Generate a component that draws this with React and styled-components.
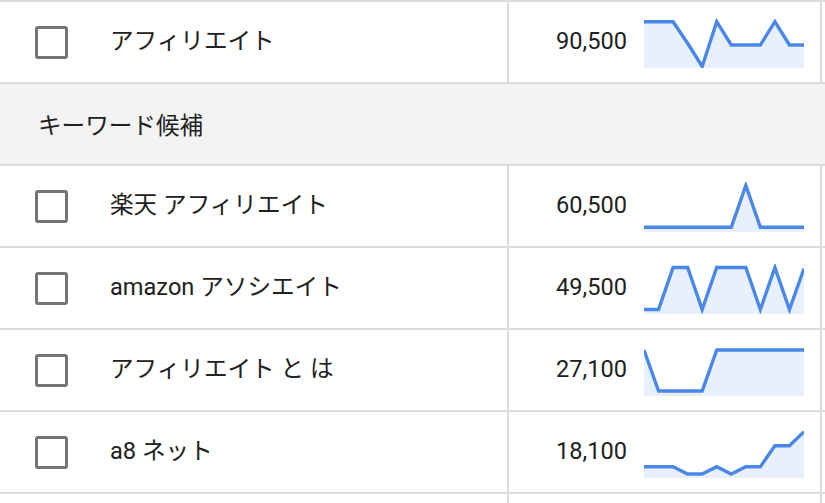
import styled, { createGlobalStyle } from 'styled-components';

const GlobalStyle = createGlobalStyle`
    html, body {
        margin: 0;
        padding: 0;
        background: #ffffff;
    }
    body {
        font-family: Roboto, "Noto Sans CJK JP", sans-serif;
        color: #212121;
    }
`;

// y values for 12 points, drawn in a 160x50 box
const searched = { keyword: 'アフィリエイト', volume: '90,500', trend: [3.7, 3.7, 3.7, 25.3, 48.5, 3.7, 27, 27, 27, 3.7, 27, 27] };

const ideas = [
    { keyword: '楽天 アフィリエイト', volume: '60,500', trend: [45.3, 45.3, 45.3, 45.3, 45.3, 45.3, 45.3, 3.5, 45.3, 45.3, 45.3, 45.3] },
    { keyword: 'amazon アソシエイト', volume: '49,500', trend: [45.5, 45.5, 3.5, 3.5, 45.5, 3.5, 3.5, 3.5, 45.5, 3.5, 45.5, 4.5] },
    { keyword: 'アフィリエイト と は', volume: '27,100', trend: [4, 45, 45, 45, 45, 4, 4, 4, 4, 4, 4, 4] },
    { keyword: 'a8 ネット', volume: '18,100', trend: [38.7, 38.7, 38.7, 46, 46, 38.7, 46, 38.7, 38.7, 17.7, 17.7, 3.7] }
];

function Sparkline ({ values }) {

    const step = 160 / (values.length - 1);
    const pts = values.map((y, i) => `${(i * step).toFixed(2)},${y}`).join(' ');

    return (
        <SparkSvg width="160" height="50" viewBox="0 0 160 50">
            <polygon points={`0,50 ${pts} 160,50`} fill="#e8f0fe" />
            <polyline points={pts} fill="none" stroke="#4a88e8" strokeWidth="3.4" strokeLinejoin="miter" />
        </SparkSvg>
    );

}

function KeywordRow ({ item }) {

    return (
        <Row>
            <KeywordCell>
                <Checkbox />
                <Keyword>{item.keyword}</Keyword>
            </KeywordCell>
            <VolumeCell>
                <Volume>{item.volume}</Volume>
                <Sparkline values={item.trend} />
            </VolumeCell>
        </Row>
    );

}

export default function App () {

    return (
        <>
            <GlobalStyle />
            <Table>
                <KeywordRow item={searched} />
                <SectionRow>キーワード候補</SectionRow>
                {ideas.map(item => <KeywordRow key={item.keyword} item={item} />)}
                <Row>
                    <KeywordCell />
                    <VolumeCell />
                </Row>
            </Table>
        </>
    );

}

const Table = styled.div`

    width: 825px;
    border-top: 2px solid #dadce0;
    display: flex;
    flex-direction: column;

`;

const Row = styled.div`

    display: flex;
    height: 80px;
    border-bottom: 2px solid #dadce0;

`;

const SectionRow = styled.div`

    height: 80px;
    display: flex;
    align-items: center;
    padding-left: 38px;
    background: #f3f3f3;
    border-bottom: 2px solid #dadce0;
    font-size: 23.6px;

`;

const KeywordCell = styled.div`

    width: 509px;
    box-sizing: border-box;
    border-right: 2px solid #dadce0;
    display: flex;
    align-items: center;
    padding-left: 35px;

`;

const Checkbox = styled.span`

    width: 33px;
    height: 33px;
    box-sizing: border-box;
    border: 3.5px solid #757575;
    border-radius: 3px;
    flex-shrink: 0;
    margin-right: 42px;

`;

const Keyword = styled.span`

    font-size: 23.6px;
    line-height: 1;
    white-space: nowrap;

`;

const VolumeCell = styled.div`

    width: 313px;
    box-sizing: border-box;
    border-right: 2px solid #dadce0;
    display: flex;
    align-items: center;
    justify-content: flex-end;
    gap: 17px;
    padding-right: 16px;

`;

const Volume = styled.span`

    font-size: 23.6px;
    line-height: 1;
    text-align: right;

`;

const SparkSvg = styled.svg`

    display: block;
    margin-top: 2px;
    flex-shrink: 0;

`;
